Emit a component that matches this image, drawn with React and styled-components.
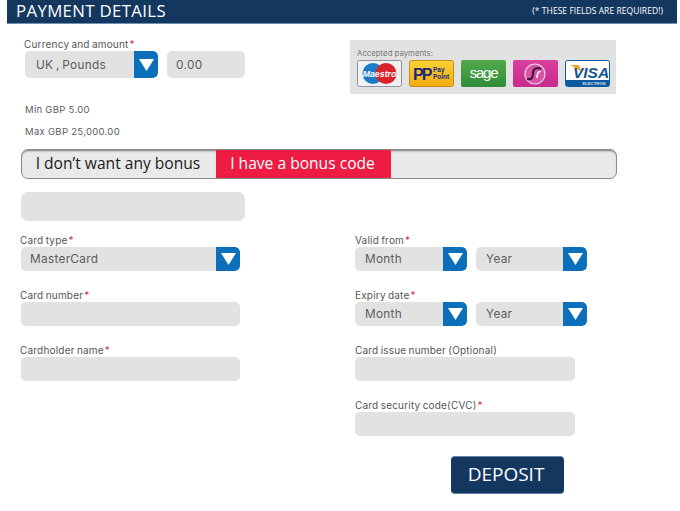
import React from "react";
import styled, { createGlobalStyle } from "styled-components";

const Global = createGlobalStyle`
  html, body { margin: 0; background: #fff; }
  * { box-sizing: border-box; }
`;
const Page = styled.div`
  width: 680px; height: 511px; padding: 0 3px 0 7px; overflow: hidden;
  font-family: Inter, "DejaVu Sans", sans-serif; color: #444;
`;
const Header = styled.header`
  height: 24px; background: #14375f; border-bottom: 1px solid #6f92b3; color: #fff;
  display: flex; align-items: center; justify-content: space-between; padding: 0 14px 1px 9px;
`;
const Title = styled.h1`
  margin: 0; font: 400 16.8px/22px "Open Sans", sans-serif; letter-spacing: .35px;
`;
const Required = styled.span`
  font: 400 8.5px/22px "Open Sans", sans-serif; letter-spacing: .05px;
`;
const Top = styled.section`
  display: flex; justify-content: space-between; align-items: flex-start;
  padding: 15px 61px 0 17px;
`;
const Label = styled.label`
  display: block; height: 12px; font-size: 10px; line-height: 10px; color: #555;
  letter-spacing: .2px; word-spacing: -.8px; white-space: nowrap;
  b { color: #d8324f; font-weight: 400; margin-left: 1px; }
`;
const Row = styled.div`display: flex; gap: ${p => p.$gap || 9}px; margin-left: ${p => p.$left || 0}px;`;
const Select = styled.div`
  width: ${p => p.$w}px; height: ${p => p.$h || 24}px; background: #e2e2e2; border-radius: 5px;
  display: flex; align-items: center; justify-content: space-between; overflow: hidden;
  font-size: 11.8px; letter-spacing: .3px; word-spacing: -1px; color: #5c5c5c; padding-left: ${p => p.$pad || 10}px;
`;
const Arrow = styled.span`
  width: 24px; height: 100%; background: #0b70b9; border-radius: 0 5px 5px 0;
  display: flex; align-items: center; justify-content: center;
  svg { display: block; }
`;
const Input = styled.input`
  display: block; width: ${p => p.$w}px; height: ${p => p.$h || 24}px; border: 0; outline: 0;
  margin-left: ${p => p.$left || 0}px;
  background: #e2e2e2; border-radius: ${p => p.$r || 5}px; padding: 0 0 0 9px;
  font: 11.8px Inter, "DejaVu Sans", sans-serif; letter-spacing: .35px; color: #5c5c5c;
`;
const Note = styled.p`
  margin: ${p => p.$top}px 0 0 1px; font-size: 9.5px; line-height: 12px; color: #5c5c5c; letter-spacing: .3px;
`;
const Panel = styled.aside`
  width: 266px; height: 54px; margin-top: 1px; background: #e2e2e2; padding: 8px 0 0 7px;
`;
const PanelTitle = styled.div`font-size: 7.8px; line-height: 11px; color: #777;`;
const Logos = styled.div`display: flex; gap: 7px; margin-top: 1px;`;
const Logo = styled.svg`display: block; width: 45px; height: 27px;`;
const Bonus = styled.div`
  display: flex; width: 596px; height: 30px; margin: 11px 0 0 14px; overflow: hidden;
  background: #e9e9e9; border-radius: 7px; border: 1px solid #8a8a8a; border-width: 1px 1px 1.5px 1px;
  box-shadow: inset 0 2px 2px -1px #777;
  font: 400 15.6px/26px "Open Sans", sans-serif;
`;
const Tab = styled.div`
  width: ${p => p.$w}px; padding-right: 2px; text-align: center; white-space: nowrap;
  color: ${p => p.$active ? "#fff" : "#1b1b1b"};
  background: ${p => p.$active ? "#ee1b43" : "transparent"};
`;
const CodeWrap = styled.div`margin: 13px 0 0 14px;`;
const Form = styled.form`
  display: grid; grid-template-columns: 335px 1fr; margin: 14px 0 0 13px;
`;
const Column = styled.div`display: flex; flex-direction: column; gap: 19px;`;
const Field = styled.div``;
const Submit = styled.button`
  width: 113px; height: 38px; margin: 1px 0 0 96px; border: 0; border-radius: 4px; padding: 0 9px 2px 6px;
  border-top: 1px solid #5d84a8; border-bottom: 1px solid #5d84a8;
  background: #14375f; color: #fff; font: 400 19px "Open Sans", sans-serif;
`;

const Tri = () => (
  <Arrow><svg width="15" height="12" viewBox="0 0 15 12"><path d="M0 0H15L7.5 12Z" fill="#fff" /></svg></Arrow>
);
const Req = ({ children }) => <Label>{children}<b>*</b></Label>;

const Maestro = () => (
  <Logo viewBox="0 0 45 27">
    <rect x=".5" y=".5" width="44" height="26" rx="2" fill="#f1f1f1" stroke="#8d93a0" />
    <circle cx="16" cy="13.5" r="10.5" fill="#1b7cc8" />
    <circle cx="29" cy="13.5" r="10.5" fill="#d9222a" />
    <text x="22.5" y="16.5" textAnchor="middle" fontFamily="Liberation Sans" fontStyle="italic" fontWeight="700" fontSize="8.8" fill="#fff">Maestro</text>
  </Logo>
);
const PayPoint = () => (
  <Logo viewBox="0 0 45 27">
    <defs><linearGradient id="pp" x1="0" y1="0" x2="0" y2="1"><stop offset="0" stopColor="#fbd234" /><stop offset="1" stopColor="#f2ab14" /></linearGradient></defs>
    <rect x=".5" y=".5" width="44" height="26" rx="2" fill="url(#pp)" stroke="#c98f1a" />
    <text x="4" y="20" fontFamily="Liberation Sans" fontWeight="700" fontSize="16" letterSpacing="-2" fill="#1b2a78">PP</text>
    <text x="24" y="12" fontFamily="Liberation Sans" fontWeight="700" fontSize="6.5" fill="#1b2a78">Pay</text>
    <text x="24" y="19" fontFamily="Liberation Sans" fontWeight="700" fontSize="6.5" fill="#1b2a78">Point</text>
  </Logo>
);
const Sage = () => (
  <Logo viewBox="0 0 45 27">
    <defs><linearGradient id="sg" x1="0" y1="0" x2="0" y2="1"><stop offset="0" stopColor="#52a94a" /><stop offset="1" stopColor="#2f8d38" /></linearGradient></defs>
    <rect width="45" height="27" rx="2" fill="url(#sg)" />
    <text x="22.5" y="18" textAnchor="middle" fontFamily="Liberation Sans" fontSize="15" letterSpacing="-1.2" fill="#fff">sage</text>
  </Logo>
);
const Solo = () => (
  <Logo viewBox="0 0 45 27">
    <defs><linearGradient id="so" x1="0" y1="0" x2="0" y2="1"><stop offset="0" stopColor="#d9409f" /><stop offset="1" stopColor="#c92a8c" /></linearGradient></defs>
    <rect width="45" height="27" rx="2" fill="url(#so)" />
    <circle cx="22" cy="14" r="10" fill="#d653a6" stroke="#f6d5e8" strokeWidth="1.2" />
    <path d="M28 9C24 7 20 8.5 20 13C20 17.5 19 20 14 19" fill="none" stroke="#4a1238" strokeWidth="2.2" />
    <path d="M28 11.5C25 11 24 14 24 18" fill="none" stroke="#fff" strokeWidth="1.6" />
  </Logo>
);
const Visa = () => (
  <Logo viewBox="0 0 45 27">
    <rect x=".5" y=".5" width="44" height="26" rx="2" fill="#fff" stroke="#0d5a9e" />
    <path d="M5 5H14L17 12Z" fill="#f0a92c" />
    <text x="26" y="18" textAnchor="middle" fontFamily="Liberation Sans" fontStyle="italic" fontWeight="700" fontSize="15.5" fill="#14568f">VISA</text>
    <rect x="1" y="20" width="43" height="6" fill="#0d5a9e" />
    <text x="29" y="25" textAnchor="middle" fontFamily="Liberation Sans" fontWeight="700" fontSize="4.2" fill="#cfe0f0">ELECTRON</text>
  </Logo>
);

export default function App() {
  return (
    <Page>
      <Global />
      <Header>
        <Title>PAYMENT DETAILS</Title>
        <Required>(* THESE FIELDS ARE REQUIRED!)</Required>
      </Header>
      <Top>
        <div>
          <Req>Currency and amount</Req>
          <Row $left={1}>
            <Select $w={133} $h={27} $pad={11}>UK , Pounds<Tri /></Select>
            <Input $w={78} $h={27} value="0.00" readOnly />
          </Row>
          <Note $top={26}>Min GBP 5.00</Note>
          <Note $top={10}>Max GBP 25,000.00</Note>
        </div>
        <Panel>
          <PanelTitle>Accepted payments:</PanelTitle>
          <Logos><Maestro /><PayPoint /><Sage /><Solo /><Visa /></Logos>
        </Panel>
      </Top>
      <Bonus>
        <Tab $w={194}>I don’t want any bonus</Tab>
        <Tab $w={175} $active>I have a bonus code</Tab>
      </Bonus>
      <CodeWrap><Input $w={224} $h={29} $r={7} aria-label="Bonus code" /></CodeWrap>
      <Form>
        <Column>
          <Field><Req>Card type</Req><Row $left={1}><Select $w={219} $pad={9}>MasterCard<Tri /></Select></Row></Field>
          <Field><Req>Card number</Req><Input $w={219} $left={1} /></Field>
          <Field><Req>Cardholder name</Req><Input $w={219} $left={1} /></Field>
        </Column>
        <Column>
          <Field><Req>Valid from</Req><Row><Select $w={112}>Month<Tri /></Select><Select $w={111}>Year<Tri /></Select></Row></Field>
          <Field><Req>Expiry date</Req><Row><Select $w={112}>Month<Tri /></Select><Select $w={111}>Year<Tri /></Select></Row></Field>
          <Field><Label>Card issue number (Optional)</Label><Input $w={220} /></Field>
          <Field><Req>Card security code(CVC)</Req><Input $w={220} /></Field>
          <Submit type="button">DEPOSIT</Submit>
        </Column>
      </Form>
    </Page>
  );
}
